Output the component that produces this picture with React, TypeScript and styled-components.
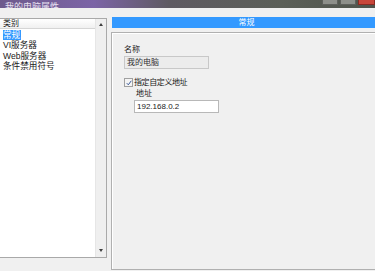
import React from "react";
import styled, { createGlobalStyle } from "styled-components";

const Global = createGlobalStyle`
  html, body { margin: 0; padding: 0; }
  body {
    background: #f0f0f0;
    font-family: "Liberation Sans", "Noto Sans CJK SC", sans-serif;
    font-size: 8px;
    color: #1a1a1a;
    width: 375px;
    height: 271px;
    overflow: hidden;
  }
`;

const Window = styled.div`
  width: 375px;
  height: 271px;
  display: flex;
  flex-direction: column;
  overflow: hidden;
`;

const TitleBar = styled.div`
  height: 8px;
  flex: none;
  display: flex;
  align-items: flex-end;
  justify-content: space-between;
  overflow: hidden;
  background: linear-gradient(90deg, #6d5a8c 0%, #7c64a6 25%, #5e5a62 45%, #5b5f58 75%, #4f544c 100%);
`;

const Title = styled.div`
  font-size: 9px;
  line-height: 9px;
  margin: 0 0 -4px 5px;
  color: #e8e0f0;
`;

const Controls = styled.div`
  display: flex;
  align-self: flex-start;
  gap: 2px;
`;

const Ctrl = styled.div<{ $close?: boolean }>`
  width: ${(p) => (p.$close ? 15 : 14)}px;
  height: 4px;
  background: ${(p) => (p.$close ? "#c8463a" : "#8d8f8a")};
  border: 1px solid ${(p) => (p.$close ? "#8a2a22" : "#5e605c")};
  border-top: none;
`;

const Body = styled.div`
  flex: none;
  display: flex;
  gap: 4px;
  padding-top: 9px;
`;

const LeftPanel = styled.div`
  width: 106px;
  height: 238px;
  margin-top: 1px;
  background: #fff;
  border: 1px solid #a9a9a9;
  border-left: none;
  display: flex;
  flex: none;
`;

const ListArea = styled.div`
  flex: 1;
  display: flex;
  flex-direction: column;
`;

const ListHeader = styled.div`
  height: 9px;
  line-height: 9px;
  padding-left: 3px;
  background: linear-gradient(#ffffff, #f0f0f0);
  border-bottom: 1px solid #d5d5d5;
`;

const ListItems = styled.div`
  display: flex;
  flex-direction: column;
  padding-top: 1px;
  font-size: 8.6px;
`;

const Item = styled.div<{ $selected?: boolean }>`
  height: 10.3px;
  line-height: 10px;
  padding-left: 3px;
  display: flex;
  align-items: center;
  span {
    padding: 0 1px 0 0;
    background: ${(p) => (p.$selected ? "#3399ff" : "transparent")};
    color: ${(p) => (p.$selected ? "#fff" : "#1a1a1a")};
  }
`;

const Scrollbar = styled.div`
  width: 10px;
  background: #efefef;
  border-left: 1px solid #e6e6e6;
  display: flex;
  flex-direction: column;
  justify-content: space-between;
  align-items: center;
  padding: 4px 0 5px;
`;

const Arrow = styled.div<{ $down?: boolean }>`
  width: 0;
  height: 0;
  border-left: 2.5px solid transparent;
  border-right: 2.5px solid transparent;
  ${(p) => (p.$down ? "border-top: 3px solid #404040;" : "border-bottom: 3px solid #404040;")}
`;

const RightCol = styled.div`
  flex: 1;
  display: flex;
  flex-direction: column;
  gap: 4px;
`;

const Banner = styled.div`
  height: 11px;
  background: #3399ff;
  color: #fff;
  line-height: 11px;
  text-align: center;
  margin-left: 1px;
  padding-left: 6px;
`;

const Panel = styled.div`
  height: 224px;
  border-top: 1px solid #b0b0b0;
  border-left: 1px solid #b0b0b0;
  border-bottom: 1px solid #b0b0b0;
  box-shadow: inset 1px 1px 0 #ffffff;
  background: #f0f0f0;
  padding: 12px 0 0 12px;
  display: flex;
  flex-direction: column;
`;

const Label = styled.div<{ $indent?: number; $top?: number }>`
  line-height: 9px;
  margin-left: ${(p) => p.$indent ?? 0}px;
  margin-top: ${(p) => p.$top ?? 0}px;
`;

const Field = styled.div<{ $disabled?: boolean; $width: number; $indent?: number }>`
  width: ${(p) => p.$width}px;
  height: 11px;
  margin-left: ${(p) => p.$indent ?? 0}px;
  margin-top: 2px;
  border: 1px solid ${(p) => (p.$disabled ? "#c8c8c8" : "#b8b8b8")};
  background: ${(p) => (p.$disabled ? "#ececec" : "#ffffff")};
  line-height: 11px;
  padding-left: 2px;
  color: ${(p) => (p.$disabled ? "#303030" : "#1a1a1a")};
`;

const CheckRow = styled.div`
  display: flex;
  align-items: center;
  gap: 1px;
  margin-top: 9px;
  line-height: 9px;
  letter-spacing: -0.4px;
`;

const Box = styled.div`
  width: 7px;
  height: 7px;
  border: 1px solid #a0a0a0;
  background: #f4f4f4;
  display: flex;
  align-items: center;
  justify-content: center;
`;

const Footer = styled.div`
  flex: none;
  height: 14px;
  display: flex;
  justify-content: flex-end;
  gap: 4px;
  padding-top: 4px;
  margin-right: -2px;
`;

const Button = styled.div`
  width: 32px;
  height: 12px;
  border: 1px solid #8f8f8f;
  border-radius: 2px;
  background: linear-gradient(#f6f6f6, #dcdcdc);
  text-align: center;
  line-height: 12px;
  color: #1a1a1a;
`;

export default function App() {
  return (
    <Window>
      <Global />
      <TitleBar>
        <Title>我的电脑属性</Title>
        <Controls>
          <Ctrl />
          <Ctrl />
          <Ctrl $close />
        </Controls>
      </TitleBar>
      <Body>
        <LeftPanel>
          <ListArea>
            <ListHeader>类别</ListHeader>
            <ListItems>
              <Item $selected><span>常规</span></Item>
              <Item><span>VI服务器</span></Item>
              <Item><span>Web服务器</span></Item>
              <Item><span>条件禁用符号</span></Item>
            </ListItems>
          </ListArea>
          <Scrollbar>
            <Arrow />
            <Arrow $down />
          </Scrollbar>
        </LeftPanel>
        <RightCol>
          <Banner>常规</Banner>
          <Panel>
            <Label>名称</Label>
            <Field $disabled $width={81}>我的电脑</Field>
            <CheckRow>
              <Box>
                <svg width="6" height="6" viewBox="0 0 6 6">
                  <path d="M0.8 3.2 L2.3 4.8 L5.3 0.8" stroke="#3a5a9a" strokeWidth="1" fill="none" />
                </svg>
              </Box>
              <span>指定自定义地址</span>
            </CheckRow>
            <Label $indent={12} $top={2}>地址</Label>
            <Field $width={81} $indent={10}>192.168.0.2</Field>
          </Panel>
        </RightCol>
      </Body>
      <Footer>
        <Button>确定</Button>
        <Button>取消</Button>
        <Button>帮助</Button>
      </Footer>
    </Window>
  );
}
